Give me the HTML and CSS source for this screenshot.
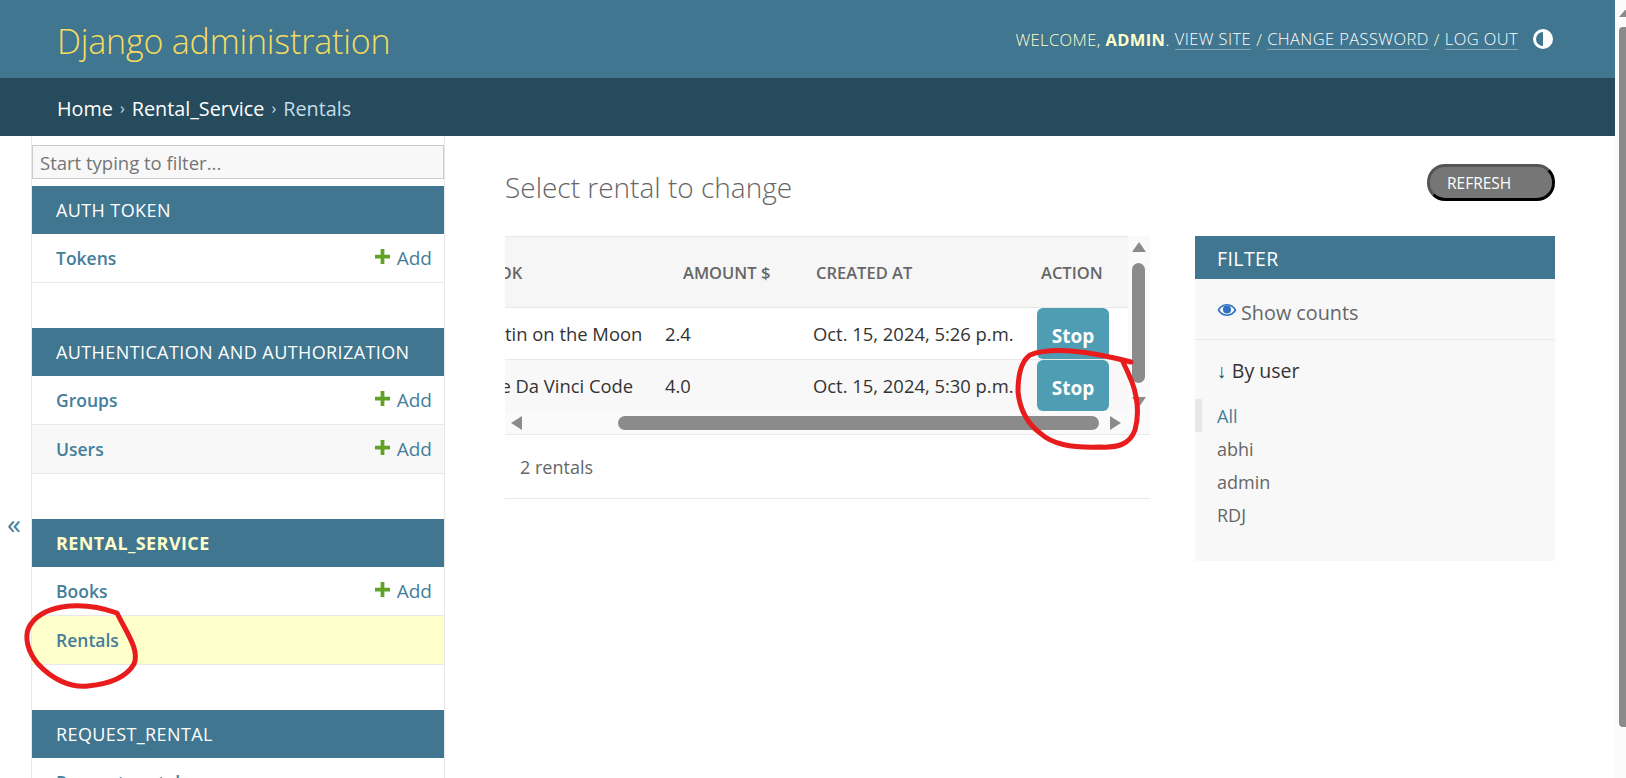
FILE: index.html
```html
<!DOCTYPE html>
<html lang="en">
<head>
  <meta charset="UTF-8">
  <meta name="viewport" content="width=device-width, initial-scale=1.0">
  <title>Select rental to change | Django site admin</title>
  <link rel="stylesheet" href="styles.css">
</head>
<body>
  <div class="page">
    <header class="site-header">
      <a class="branding" href="#">Django administration</a>
      <div class="user-tools">
        <span>Welcome, <strong>admin</strong>.</span>
        <a href="#">View site</a> /
        <a href="#">Change password</a> /
        <a href="#">Log out</a>
        <svg class="theme-icon" viewBox="0 0 20 20" width="20" height="20">
          <circle cx="10" cy="10" r="8.5" fill="#417690" stroke="#fff" stroke-width="3"/>
          <path d="M10 1a9 9 0 0 1 0 18z" fill="#fff"/>
        </svg>
      </div>
    </header>

    <nav class="breadcrumbs">
      <a href="#">Home</a> <span class="sep">›</span>
      <a href="#">Rental_Service</a> <span class="sep">›</span>
      <span class="current">Rentals</span>
    </nav>

    <div class="main">
      <button class="toggle-nav" type="button">«</button>

      <aside class="sidebar">
        <input class="nav-filter" type="text" placeholder="Start typing to filter...">

        <div class="module">
          <h2 class="caption">Auth Token</h2>
          <div class="nav-row"><a href="#">Tokens</a><a class="add-link" href="#"><svg class="plus" viewBox="0 0 16 16" width="15" height="15"><path d="M6 0h4v6h6v4h-6v6H6v-6H0V6h6z"/></svg>Add</a></div>
        </div>

        <div class="module">
          <h2 class="caption">Authentication and Authorization</h2>
          <div class="nav-row"><a href="#">Groups</a><a class="add-link" href="#"><svg class="plus" viewBox="0 0 16 16" width="15" height="15"><path d="M6 0h4v6h6v4h-6v6H6v-6H0V6h6z"/></svg>Add</a></div>
          <div class="nav-row alt"><a href="#">Users</a><a class="add-link" href="#"><svg class="plus" viewBox="0 0 16 16" width="15" height="15"><path d="M6 0h4v6h6v4h-6v6H6v-6H0V6h6z"/></svg>Add</a></div>
        </div>

        <div class="module">
          <h2 class="caption active">Rental_Service</h2>
          <div class="nav-row"><a href="#">Books</a><a class="add-link" href="#"><svg class="plus" viewBox="0 0 16 16" width="15" height="15"><path d="M6 0h4v6h6v4h-6v6H6v-6H0V6h6z"/></svg>Add</a></div>
          <div class="nav-row selected"><a href="#">Rentals</a></div>
        </div>

        <div class="module">
          <h2 class="caption">Request_Rental</h2>
          <div class="nav-row"><a href="#">Request rentals</a></div>
        </div>
      </aside>

      <main class="content">
        <div class="title-row">
          <h1>Select rental to change</h1>
          <button class="refresh-btn" type="button">REFRESH</button>
        </div>

        <div class="changelist">
          <div class="results-box">
            <div class="results-view">
              <div class="table-clip">
                <table class="results">
                  <colgroup>
                    <col class="col-book"><col class="col-amount"><col class="col-created"><col class="col-action">
                  </colgroup>
                  <thead>
                    <tr>
                      <th>Book</th>
                      <th class="th-amount">Amount $</th>
                      <th class="th-created">Created at</th>
                      <th class="th-action">Action</th>
                    </tr>
                  </thead>
                  <tbody>
                    <tr>
                      <td class="td-book">Tintin on the Moon</td>
                      <td>2.4</td>
                      <td>Oct. 15, 2024, 5:26 p.m.</td>
                      <td class="td-action"><button class="stop-btn" type="button">Stop</button></td>
                    </tr>
                    <tr class="alt">
                      <td class="td-book">The Da Vinci Code</td>
                      <td>4.0</td>
                      <td>Oct. 15, 2024, 5:30 p.m.</td>
                      <td class="td-action"><button class="stop-btn" type="button">Stop</button></td>
                    </tr>
                  </tbody>
                </table>
              </div>
              <div class="v-scroll">
                <span class="arrow-up"></span>
                <span class="v-thumb"></span>
                <span class="arrow-down"></span>
              </div>
            </div>
            <div class="h-scroll">
              <span class="arrow-left"></span>
              <span class="h-thumb"></span>
              <span class="arrow-right"></span>
            </div>
            <p class="paginator">2 rentals</p>
          </div>

          <div class="filter">
            <h2 class="filter-title">Filter</h2>
            <div class="show-counts">
              <svg class="eye" viewBox="0 0 20 14" width="20" height="14">
                <path d="M10 1C5.6 1 2.2 3.8.6 7c1.600 3.200 5 6 9.400 6s7.800-2.800 9.400-6C17.800 3.800 14.400 1 10 1zm0 10.400C7 11.400 4 9.600 2.500 7 4 4.400 7 2.600 10 2.600s6 1.800 7.500 4.400C16 9.600 13 11.400 10 11.400z" fill="#2f6fc4"/>
                <circle cx="10" cy="6.600" r="4" fill="#2f6fc4"/>
              </svg>
              <span>Show counts</span>
            </div>
            <div class="filter-group">
              <div class="filter-name"><span class="down-arrow">↓</span> By user</div>
              <ul class="filter-list">
                <li class="on"><a href="#">All</a></li>
                <li><a href="#">abhi</a></li>
                <li><a href="#">admin</a></li>
                <li><a href="#">RDJ</a></li>
              </ul>
            </div>
          </div>
        </div>
      </main>
    </div>
  </div>

  <div class="page-scroll">
    <span class="page-arrow"></span>
    <span class="page-thumb"></span>
  </div>

  <!-- red pen marks on top of the screenshot -->
  <svg class="pen-marks" viewBox="0 0 1626 778" width="1626" height="778">
    <path d="M117 613C100 607 80 604 62 607C45 610 34 618 29 627C24 638 28 652 38 664C52 679 70 688 88 686C108 684 126 678 134 664C140 650 126 632 117 613Z"/>
    <path d="M1131 362C1112 357 1095 353 1071 351C1055 350 1040 351 1030 355C1020 362 1018 378 1018 392C1020 410 1028 424 1040 433C1052 444 1070 448 1100 447C1118 448 1130 444 1135 430C1140 412 1137 396 1132 382C1128 372 1125 366 1122 360"/>
  </svg>
</body>
</html>
```

FILE: styles.css
```css
* {
  box-sizing: border-box;
}

html, body {
  height: 778px;
  margin: 0;
  overflow: hidden;
}

body {
  display: flex;
  font-family: "Open Sans", "Noto Sans", sans-serif;
  font-size: 17px;
  color: #333;
  background-color: #fff;
  position: relative;
}

a {
  text-decoration: none;
  color: #447e9b;
}

.page {
  flex: 1;
  min-width: 0;
  height: 778px;
  overflow: hidden;
}

/* header */
.site-header {
  height: 78px;
  padding: 0 62px 0 57px;
  display: flex;
  align-items: center;
  justify-content: space-between;
  background-color: #417690;
}

.branding {
  font-size: 34px;
  font-weight: 300;
  color: #f5dd5d;
  letter-spacing: -0.2px;
  position: relative;
  top: 2px;
}

.user-tools {
  display: flex;
  align-items: center;
  gap: 5px;
  font-size: 16.5px;
  font-weight: 300;
  color: #ffc;
  text-transform: uppercase;
  letter-spacing: 0.4px;
}

.user-tools strong {
  font-weight: 700;
}

.user-tools a {
  color: #fff;
  border-bottom: 1px solid rgba(255, 255, 255, 0.35);
  line-height: 21px;
}

.theme-icon {
  margin-left: 10px;
}

.breadcrumbs {
  height: 58px;
  padding: 2px 0 0 57px;
  display: flex;
  align-items: center;
  gap: 7px;
  font-size: 19.8px;
  background-color: #264b5d;
  color: #c4dce8;
}

.breadcrumbs a {
  color: #fff;
}

.breadcrumbs .sep {
  font-size: 16px;
  color: #c4dce8;
}

/* main layout */
.main {
  display: flex;
  height: 642px;
}

.toggle-nav {
  width: 31px;
  height: 40px;
  margin-top: 367px;
  padding: 0 0 0 7px;
  border: none;
  background: none;
  font-family: inherit;
  font-size: 28px;
  line-height: 36px;
  text-align: left;
  color: #447e9b;
}

/* sidebar */
.sidebar {
  width: 414px;
  flex-shrink: 0;
  padding-top: 9px;
  border-left: 1px solid #e8e8e8;
  border-right: 1px solid #e8e8e8;
}

.nav-filter {
  display: block;
  width: 100%;
  height: 34px;
  margin-bottom: 7px;
  padding: 0 7px;
  border: 1px solid #ccc;
  background-color: #f8f8f8;
  font-family: inherit;
  font-size: 18.5px;
}

.nav-filter::placeholder {
  color: #757575;
}

.module {
  margin-bottom: 45px;
}

.caption {
  height: 48px;
  margin: 0;
  padding: 0 24px;
  display: flex;
  align-items: center;
  background-color: #417690;
  color: #fff;
  font-size: 18px;
  font-weight: 400;
  text-transform: uppercase;
  letter-spacing: 0.4px;
}

.caption.active {
  color: #ffc;
  font-weight: 700;
}

.nav-row {
  height: 49px;
  padding: 0 12px 0 24px;
  display: flex;
  align-items: center;
  justify-content: space-between;
  border-bottom: 1px solid #e8e8e8;
  font-size: 17.5px;
  font-weight: 600;
}

.nav-row.alt {
  background-color: #f8f8f8;
}

.nav-row.selected {
  background-color: #ffc;
}

.add-link {
  display: flex;
  align-items: center;
  gap: 7px;
  font-size: 19px;
  font-weight: 400;
}

.plus {
  fill: #5fa225;
  margin-top: -3px;
}

/* content */
.content {
  flex: 1;
  min-width: 0;
  padding: 28px 60px 0;
}

.title-row {
  height: 72px;
  display: flex;
  justify-content: space-between;
  align-items: flex-start;
}

.title-row h1 {
  margin: 4px 0 0;
  font-size: 28px;
  font-weight: 300;
  color: #666;
}

.refresh-btn {
  width: 128px;
  height: 37px;
  padding: 1px 0 0 17px;
  border: 3px solid;
  border-color: #555 #000 #000 #555;
  border-radius: 18px;
  background-color: #767676;
  color: #fff;
  font-family: inherit;
  font-size: 15.5px;
  text-align: left;
}

.changelist {
  display: flex;
  gap: 45px;
}

.results-box {
  width: 645px;
  flex-shrink: 0;
}

.results-view {
  display: flex;
  height: 175px;
}

.table-clip {
  width: 623px;
  overflow: hidden;
}

.results {
  width: 623px;
  table-layout: fixed;
  border-collapse: collapse;
  font-size: 18.4px;
}

.col-book { width: 152px; }
.col-amount { width: 148px; }
.col-created { width: 224px; }
.col-action { width: 99px; }

.results th {
  height: 71px;
  padding: 0 0 0 8px;
  border-top: 1px solid #e8e8e8;
  border-bottom: 1px solid #e8e8e8;
  background-color: #f6f6f6;
  font-size: 16.5px;
  font-weight: 600;
  text-align: left;
  text-transform: uppercase;
  color: #666;
  white-space: nowrap;
  overflow: hidden;
}

/* the table is scrolled sideways, so the first column starts cut off */
.results th:first-child {
  padding-left: 0;
  text-indent: -30px;
}

.results .th-amount { padding-left: 26px; }
.results .th-created { padding-left: 11px; }
.results .th-action { padding-left: 12px; }

.results td {
  height: 52px;
  padding: 0 0 0 8px;
  border-bottom: 1px solid #e8e8e8;
  white-space: nowrap;
  overflow: hidden;
}

.results tr.alt td {
  background-color: #f8f8f8;
}

.results .td-book {
  padding: 0;
  text-indent: -26px;
}

.results td.td-action {
  padding: 0 0 0 8px;
}

.stop-btn {
  display: block;
  width: 72px;
  height: 51px;
  padding: 5px 0 0;
  border: none;
  border-radius: 6px;
  background-color: #4f9db3;
  color: #fff;
  font-family: inherit;
  font-size: 19px;
  font-weight: 700;
}

/* fake scrollbars of the table */
.v-scroll {
  position: relative;
  width: 22px;
  background-color: #fafafa;
  display: flex;
  flex-direction: column;
  align-items: center;
  padding: 6px 1px 0 0;
}

.arrow-up {
  border-left: 7px solid transparent;
  border-right: 7px solid transparent;
  border-bottom: 10px solid #8b8b8b;
}

.v-thumb {
  width: 13px;
  height: 120px;
  margin-top: 11px;
  border-radius: 7px;
  background-color: #8b8b8b;
}

.arrow-down {
  margin-top: 14px;
  border-left: 7px solid transparent;
  border-right: 7px solid transparent;
  border-top: 10px solid #8b8b8b;
}

.h-scroll {
  height: 24px;
  padding-left: 6px;
  display: flex;
  align-items: center;
  background-color: #fafafa;
  border-bottom: 1px solid #e8e8e8;
}

.arrow-left {
  border-top: 7px solid transparent;
  border-bottom: 7px solid transparent;
  border-right: 11px solid #8b8b8b;
}

.h-thumb {
  width: 481px;
  height: 14px;
  margin-left: 96px;
  border-radius: 7px;
  background-color: #8b8b8b;
}

.arrow-right {
  margin-left: 11px;
  border-top: 7px solid transparent;
  border-bottom: 7px solid transparent;
  border-left: 11px solid #8b8b8b;
}

.paginator {
  height: 64px;
  margin: 0;
  padding-left: 15px;
  display: flex;
  align-items: center;
  border-bottom: 1px solid #e8e8e8;
  color: #666;
  font-size: 18px;
}

/* filter panel */
.filter {
  width: 360px;
  height: 325px;
  background-color: #f8f8f8;
}

.filter-title {
  height: 43px;
  margin: 0;
  padding: 1px 0 0 22px;
  display: flex;
  align-items: center;
  background-color: #417690;
  color: #fff;
  font-size: 19.5px;
  font-weight: 400;
  text-transform: uppercase;
  letter-spacing: 0.4px;
}

.show-counts {
  height: 61px;
  padding: 6px 0 0 22px;
  display: flex;
  align-items: center;
  gap: 4px;
  border-bottom: 1px solid #e8e8e8;
  font-size: 19.8px;
  color: #666;
}

.eye {
  margin-top: -5px;
}

.filter-group {
  padding-top: 15px;
}

.filter-name {
  padding-left: 22px;
  font-size: 19.5px;
  line-height: 32px;
  color: #333;
}

.down-arrow {
  color: #264b5d;
}

.filter-list {
  list-style: none;
  margin: 12px 0 0;
  padding: 0;
  font-size: 18px;
}

.filter-list li {
  height: 33px;
  padding-left: 22px;
  display: flex;
  align-items: center;
  border-left: 0 solid #e8e8e8;
}

.filter-list li a {
  color: #666;
}

.filter-list li.on {
  padding-left: 15px;
  border-left-width: 7px;
}

.filter-list li.on a {
  color: #447e9b;
}

/* browser scrollbar of the page */
.page-scroll {
  width: 11px;
  flex-shrink: 0;
  background-color: #fbfbfb;
  padding-left: 4px;
  padding-top: 10px;
}

.page-arrow {
  display: block;
  border-left: 6px solid transparent;
  border-bottom: 7px solid #8b8b8b;
}

.page-thumb {
  display: block;
  height: 700px;
  margin-top: 10px;
  border-radius: 4px 0 0 4px;
  background-color: #8b8b8b;
}

.pen-marks {
  position: absolute;
  left: 0;
  top: 0;
  display: block;
  pointer-events: none;
}

.pen-marks path {
  fill: none;
  stroke: #e81c1c;
  stroke-width: 5;
  stroke-linecap: round;
  stroke-linejoin: round;
}
```
